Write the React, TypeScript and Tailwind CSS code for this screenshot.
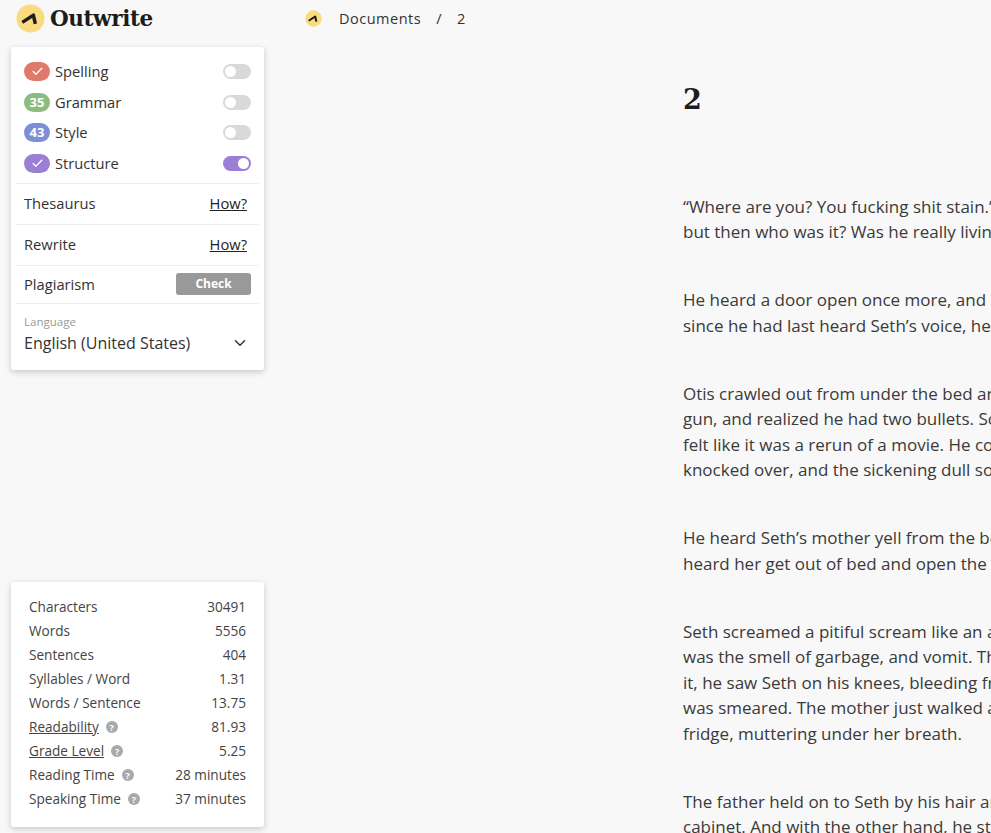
import { ChevronDown, Check } from "lucide-react";

const paragraphs = [
  ["“Where are you? You fucking shit stain.”", "but then who was it? Was he really living"],
  ["He heard a door open once more, and", "since he had last heard Seth’s voice, he"],
  [
    "Otis crawled out from under the bed an",
    "gun, and realized he had two bullets. So",
    "felt like it was a rerun of a movie. He co",
    "knocked over, and the sickening dull so",
  ],
  ["He heard Seth’s mother yell from the be", "heard her get out of bed and open the"],
  [
    "Seth screamed a pitiful scream like an a",
    "was the smell of garbage, and vomit. Th",
    "it, he saw Seth on his knees, bleeding fr",
    "was smeared. The mother just walked a",
    "fridge, muttering under her breath.",
  ],
  ["The father held on to Seth by his hair an", "cabinet. And with the other hand, he st"],
];

const checks = [
  { label: "Spelling", bg: "bg-[#e0796c]", on: false, badge: null },
  { label: "Grammar", bg: "bg-[#8cbd7f]", on: false, badge: "35" },
  { label: "Style", bg: "bg-[#7b8fd6]", on: false, badge: "43" },
  { label: "Structure", bg: "bg-[#9a7fd4]", on: true, badge: null },
];

const stats = [
  { label: "Characters", value: "30491" },
  { label: "Words", value: "5556" },
  { label: "Sentences", value: "404" },
  { label: "Syllables / Word", value: "1.31" },
  { label: "Words / Sentence", value: "13.75" },
  { label: "Readability", value: "81.93", link: true, help: true },
  { label: "Grade Level", value: "5.25", link: true, help: true },
  { label: "Reading Time", value: "28 minutes", help: true },
  { label: "Speaking Time", value: "37 minutes", help: true },
];

function Logo({ size, className }: { size: number; className?: string }) {
  return (
    <svg width={size} height={size} viewBox="0 0 30 30" className={className}>
      <circle cx="15" cy="15" r="14.5" fill="#fbdb80" />
      <path d="M6.5 19 L18 11.5 L20 20.5" fill="none" stroke="#1c1c1c" strokeWidth="3.6" strokeLinejoin="round" />
    </svg>
  );
}

function Toggle({ on }: { on: boolean }) {
  return (
    <div className={`flex h-[15px] w-[28px] items-center rounded-full p-[2px] ${on ? "justify-end bg-[#9a7fd4]" : "justify-start bg-[#d9d9d9]"}`}>
      <div className="h-[11px] w-[11px] rounded-full bg-white" />
    </div>
  );
}

function Help() {
  return (
    <span className="ml-[7px] flex h-[12px] w-[12px] items-center justify-center rounded-full bg-[#a9a9a9] text-[9px] leading-none font-bold text-white">
      ?
    </span>
  );
}

export default function App() {
  return (
    <div className="flex h-[833px] w-[991px] overflow-hidden bg-[#f8f8f8] font-['Open_Sans',sans-serif] text-[#333]">
      {/* Sidebar */}
      <div className="flex w-[305px] shrink-0 flex-col pl-[11px]">
        <div className="flex h-[47px] items-center pb-[10px] pl-[5px]">
          <Logo size={29} />
          <span className="ml-[5px] font-['DejaVu_Serif',serif] text-[21.5px] leading-none font-bold tracking-[-0.4px] text-[#1c1c1c]">Outwrite</span>
        </div>

        <div className="h-[323px] w-[253px] rounded-[3px] bg-white px-[5px] shadow-[0_2px_6px_rgba(0,0,0,0.2)]">
          <div className="flex h-[137px] flex-col border-b border-[#eee] px-[8px] pt-[15px]">
            {checks.map((c) => (
              <div key={c.label} className="flex h-[30.6px] shrink-0 items-start">
                <div className={`mr-[5px] flex h-[19px] w-[26px] items-center justify-center rounded-full text-[13px] leading-none font-bold text-white ${c.bg}`}>
                  {c.badge ?? <Check size={13} strokeWidth={2.5} />}
                </div>
                <span className="flex-1 text-[14.7px] leading-[19px]">{c.label}</span>
                <div className="pt-[2px]">
                  <Toggle on={c.on} />
                </div>
              </div>
            ))}
          </div>
          <div className="flex h-[41px] items-center justify-between border-b border-[#eee] pr-[12px] pb-[2px] pl-[8px] text-[14.7px]">
            <span>Thesaurus</span>
            <span className="text-[#222] underline">How?</span>
          </div>
          <div className="flex h-[41px] items-center justify-between border-b border-[#eee] pr-[12px] pb-[2px] pl-[8px] text-[14.7px]">
            <span>Rewrite</span>
            <span className="text-[#222] underline">How?</span>
          </div>
          <div className="flex h-[38px] items-center justify-between border-b border-[#eee] px-[8px] text-[14.7px]">
            <span>Plagiarism</span>
            <span className="mb-[1px] flex h-[22px] w-[75px] items-center justify-center rounded-[3px] bg-[#999] text-[12px] font-bold text-white">Check</span>
          </div>
          <div className="px-[8px] pt-[10px]">
            <div className="text-[11.5px] leading-[16px] text-[#999]">Language</div>
            <div className="flex items-center justify-between pt-[1px] pr-[2px] text-[16px] leading-[24px]">
              <span>English (United States)</span>
              <ChevronDown size={18} strokeWidth={2} />
            </div>
          </div>
        </div>

        <div className="mt-[212px] w-[253px] rounded-[3px] bg-white pt-[13px] pr-[18px] pb-[16px] pl-[18px] text-[13.6px] leading-[24px] text-[#444] shadow-[0_2px_6px_rgba(0,0,0,0.2)]">
          {stats.map((s) => (
            <div key={s.label} className="flex items-center justify-between">
              <span className="flex items-center">
                <span className={s.link ? "underline" : ""}>{s.label}</span>
                {s.help && <Help />}
              </span>
              <span>{s.value}</span>
            </div>
          ))}
        </div>
      </div>

      {/* Main */}
      <div className="min-w-0 flex-1 overflow-hidden">
        <div className="flex h-[37px] items-center text-[14.5px] tracking-[0.5px]">
          <Logo size={17} />
          <span className="ml-[17px]">Documents</span>
          <span className="ml-[15px]">/</span>
          <span className="ml-[15px]">2</span>
        </div>
        <div className="w-[800px] pl-[378px]">
          <h1 className="mt-[44px] font-['DejaVu_Serif',serif] text-[27px] leading-[38px] font-bold text-[#1c1c1c]">2</h1>
          <div className="mt-[74.5px] text-[17px] leading-[25.5px] whitespace-nowrap text-[#3a3a3a]">
            {paragraphs.map((lines, i) => (
              <p key={i} className="mb-[42.5px]">
                {lines.map((l) => (
                  <span key={l} className="block">
                    {l}
                  </span>
                ))}
              </p>
            ))}
          </div>
        </div>
      </div>
    </div>
  );
}
